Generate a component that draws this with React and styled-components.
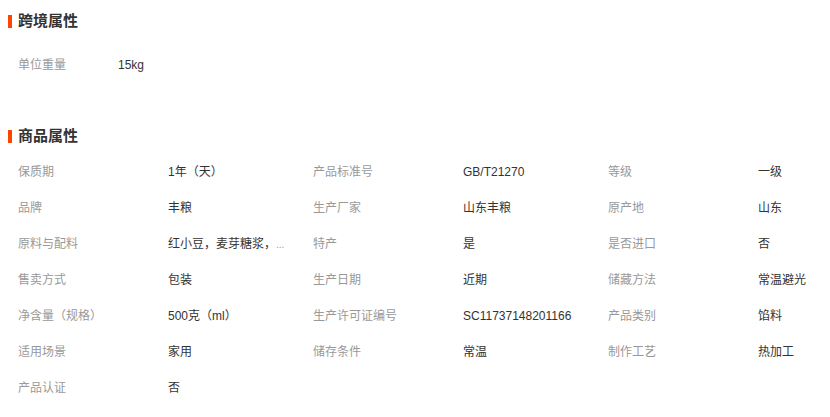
import styled, { createGlobalStyle } from "styled-components";

const GlobalStyle = createGlobalStyle`
  body {
    margin: 0;
    background: #fff;
    font-family: "Liberation Sans", "Noto Sans CJK SC", sans-serif;
  }
`;

const Page = styled.div`
  width: 830px;
  height: 417px;
  overflow: hidden;
`;

const Section = styled.section`
  margin-top: ${(p) => p.$top}px;
`;

const Title = styled.h3`
  margin: 0;
  height: 20px;
  line-height: 20px;
  padding-left: 18px;
  position: relative;
  font-size: 15px;
  font-weight: bold;
  color: #333;
  &::before {
    content: "";
    position: absolute;
    left: 8px;
    top: 4px;
    width: 4px;
    height: 13px;
    background: #ff4400;
  }
`;

const Grid = styled.div`
  display: grid;
  grid-template-columns: ${(p) => p.$cols};
  grid-auto-rows: 36px;
  padding-left: 18px;
  margin-top: ${(p) => p.$top}px;
  font-size: 12px;
`;

const Label = styled.div`
  color: #999;
  line-height: 36px;
  white-space: nowrap;
`;

const Value = styled.div`
  color: #333;
  line-height: 36px;
  white-space: nowrap;
`;

const More = styled.span`
  color: #999;
  font-size: 10px;
`;

const crossBorder = [["单位重量", "15kg"]];

const goods = [
  ["保质期", "1年（天）"],
  ["产品标准号", "GB/T21270"],
  ["等级", "一级"],
  ["品牌", "丰粮"],
  ["生产厂家", "山东丰粮"],
  ["原产地", "山东"],
  ["原料与配料", <>红小豆，麦芽糖浆，<More>...</More></>],
  ["特产", "是"],
  ["是否进口", "否"],
  ["售卖方式", "包装"],
  ["生产日期", "近期"],
  ["储藏方法", "常温避光"],
  ["净含量（规格）", "500克（ml）"],
  ["生产许可证编号", "SC11737148201166"],
  ["产品类别", "馅料"],
  ["适用场景", "家用"],
  ["储存条件", "常温"],
  ["制作工艺", "热加工"],
  ["产品认证", "否"],
];

const Attrs = ({ items }) =>
  items.map(([k, v]) => [
    <Label key={k + "-l"}>{k}</Label>,
    <Value key={k + "-v"}>{v}</Value>,
  ]);

export default function App() {
  return (
    <Page>
      <GlobalStyle />
      <Section $top={11}>
        <Title>跨境属性</Title>
        <Grid $cols="100px 145px" $top={16}>
          <Attrs items={crossBorder} />
        </Grid>
      </Section>
      <Section $top={43}>
        <Title>商品属性</Title>
        <Grid $cols="150px 145px 150px 145px 150px 145px" $top={8}>
          <Attrs items={goods} />
        </Grid>
      </Section>
    </Page>
  );
}
